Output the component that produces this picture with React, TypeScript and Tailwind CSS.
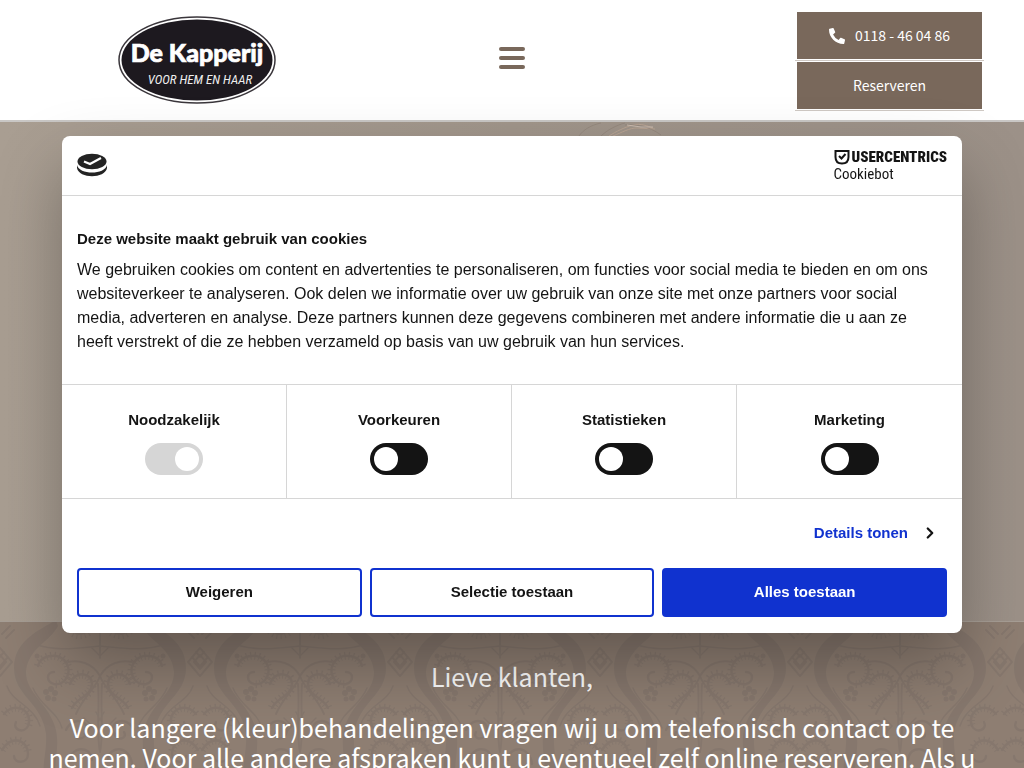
import React from 'react';
import { FaPhoneAlt } from 'react-icons/fa';
import { ChevronRight } from 'lucide-react';

const categories = [
  { id: 'necessary', label: 'Noodzakelijk', locked: true },
  { id: 'preferences', label: 'Voorkeuren', locked: false },
  { id: 'statistics', label: 'Statistieken', locked: false },
  { id: 'marketing', label: 'Marketing', locked: false },
];

function Logo() {
  return (
    <svg viewBox="0 0 158 88" className="w-[158px] h-[88px]" role="img" aria-label="De Kapperij">
      <ellipse cx="79" cy="44" rx="78" ry="43" fill="#fff" stroke="#3a363b" strokeWidth="1.5" />
      <ellipse cx="79" cy="44" rx="75.5" ry="40.5" fill="#1d191f" />
      <text
        x="79"
        y="46"
        textAnchor="middle"
        fill="#fff"
        stroke="#fff"
        strokeWidth="0.7"
        className="font-['Lato'] font-black text-[25px]"
      >
        De Kapperij
      </text>
      <text
        x="82"
        y="68"
        textAnchor="middle"
        fill="#eee"
        className="font-['Roboto_Condensed','Roboto',sans-serif] italic text-[13px]"
      >
        VOOR HEM EN HAAR
      </text>
    </svg>
  );
}

// One half of the wallpaper motif, the other half is its mirror image
function DamaskHalf() {
  return (
    <g fill="none" stroke="#766b65" strokeLinecap="round">
      <path
        d="M56 -2C40 8 14 18 14 46C14 74 42 80 46 112C47 130 42 140 44 156L56 156C53 140 60 128 56 108C50 82 26 72 26 50C28 26 50 20 58 4Z"
        fill="#766b65"
        stroke="none"
      />
      <path d="M7 64C12 80 34 84 40 104M34 22C58 30 78 26 100 24M33 66C40 84 58 90 62 106" strokeWidth="1.5" />
      <path d="M100 54C92 40 78 38 68 40M100 54C96 66 84 74 76 92M98 62C100 84 96 110 100 130" strokeWidth="2" />
      <path d="M38 44C40 34 56 30 64 38C74 48 66 64 54 62C46 60 46 50 54 50" strokeWidth="2.5" />
      <path d="M38 44C40 34 56 30 64 38C74 48 66 64 54 62" strokeWidth="8" strokeDasharray="1.2 3" strokeLinecap="butt" />
      <path d="M70 62C74 48 92 50 92 62C92 74 76 76 72 86" strokeWidth="2.5" />
      <path d="M70 62C74 48 92 50 92 62C92 74 76 76 72 86" strokeWidth="9" strokeDasharray="1.2 3" strokeLinecap="butt" />
      <path d="M70 -2C68 12 84 16 88 6C90 0 82 -2 80 4" strokeWidth="3" />
      <path d="M66 -2C64 18 90 20 94 4" strokeWidth="5" strokeDasharray="1.2 3" strokeLinecap="butt" />
      <path d="M4 92C16 78 34 90 28 104C24 112 12 108 16 100M2 128C12 112 28 118 28 132C28 142 14 142 14 134" strokeWidth="2.5" />
      <path d="M4 92C16 78 34 90 28 104M2 128C12 112 28 118 28 132" strokeWidth="8" strokeDasharray="1.2 3" strokeLinecap="butt" />
      <path d="M66 108C74 92 92 100 86 112C82 120 72 116 76 110M68 142C70 124 90 122 92 138" strokeWidth="2.5" />
      <path d="M100 -2V36M92 26L100 34M84 96L92 104L84 112M96 90L100 98" strokeWidth="1.5" />
      <path d="M0 26L12 40L0 54M0 33L6 40L0 47M4 30L-8 44M8 35L-4 49M10 4L2 12M14 8L6 16" strokeWidth="2" />
      <circle cx="37" cy="34" r="2.5" fill="#766b65" stroke="none" />
      <g fill="#766b65" stroke="none">
        <circle cx="46" cy="70" r="3" />
        <circle cx="51" cy="67" r="3" />
        <circle cx="55" cy="71" r="3" />
        <circle cx="48" cy="76" r="3" />
        <circle cx="54" cy="77" r="2.5" />
      </g>
    </g>
  );
}

function Damask() {
  return (
    <svg className="absolute inset-0 w-full h-full" aria-hidden="true">
      <defs>
        <pattern id="damask" width="200" height="150" patternUnits="userSpaceOnUse">
          <DamaskHalf />
          <g transform="translate(200 0) scale(-1 1)">
            <DamaskHalf />
          </g>
        </pattern>
      </defs>
      <rect width="100%" height="100%" fill="url(#damask)" opacity="0.35" />
    </svg>
  );
}

function Header() {
  return (
    <header className="grid grid-cols-3 items-start h-[122px] bg-white border-b-2 border-[#c9c7c5]">
      <a href="#home" className="justify-self-start mt-4 ml-[118px]">
        <Logo />
      </a>
      <button type="button" aria-label="Menu" className="justify-self-center mt-[47px] flex flex-col gap-[5px]">
        <span className="block w-[26px] h-1 rounded-full bg-[#79685b]" />
        <span className="block w-[26px] h-1 rounded-full bg-[#79685b]" />
        <span className="block w-[26px] h-1 rounded-full bg-[#79685b]" />
      </button>
      <div className="justify-self-end mt-3 mr-10 flex flex-col gap-px font-['Noto_Sans_CJK_SC',sans-serif] text-[14px] text-white">
        <div className="w-[189px] px-[2px] pb-px border-b border-[#cfc9c4]">
          <a href="tel:0118460486" className="flex items-center justify-center gap-[10px] h-[47px] bg-[#79685b]">
            <FaPhoneAlt className="w-4 h-4" />
            0118 - 46 04 86
          </a>
        </div>
        <div className="w-[189px] px-[2px] pb-px border-b border-[#cfc9c4]">
          <a href="#reserveren" className="flex items-center justify-center h-[47px] bg-[#79685b]">
            Reserveren
          </a>
        </div>
      </div>
    </header>
  );
}

function Hero() {
  return (
    <section className="relative h-[500px] bg-linear-to-r from-[#a99e92] via-[#a1968b] to-[#9c9188] border-b border-[#a79e95]">
      <svg
        viewBox="0 0 90 14"
        className="absolute top-0 left-[575px] w-[90px] h-[14px]"
        fill="none"
        stroke="#b9a493"
        aria-hidden="true"
      >
        <path d="M34 14C42 9 48 6 58 3C66 1 72 4 78 6M38 14C48 10 54 6 62 6L80 7" strokeWidth="1" />
        <path d="M4 14C8 8 16 3 26 1M26 14C32 8 42 3 50 1M50 3C60 2 74 4 86 13" strokeWidth="0.5" stroke="#8b7d72" />
        <path d="M52 3L66 5L78 5" stroke="#d3c4b7" strokeWidth="0.8" />
      </svg>
    </section>
  );
}

function Notice() {
  return (
    <section className="relative bg-[#8e7e72] px-10 pt-[34px] pb-12 text-center font-['Noto_Sans_CJK_SC',sans-serif] text-white">
      <Damask />
      <div className="relative">
        <h2 className="text-[25px] leading-10">Lieve klanten,</h2>
        <p className="mt-4 text-[25px] leading-[30px]">
          Voor langere (kleur)behandelingen vragen wij u om telefonisch contact op te nemen. Voor alle andere
          afspraken kunt u eventueel zelf online reserveren. Als u
        </p>
      </div>
    </section>
  );
}

function CookieIcon() {
  return (
    <svg viewBox="0 0 30 24" className="w-[30px] h-6" aria-hidden="true">
      <path d="M0 12C2 22 28 22 30 12V15C28 26 2 26 0 15Z" fill="#232323" />
      <ellipse cx="15" cy="8.5" rx="14.5" ry="7.8" fill="#232323" />
      <path d="M7 8.5L13 11L24 5" fill="none" stroke="#fff" strokeWidth="2.2" />
    </svg>
  );
}

function CookiebotLogo() {
  return (
    <a
      href="#cookiebot"
      className="flex flex-col pt-[2px] text-[15px] leading-[17px] text-[#141414] font-['Roboto_Condensed','Roboto',sans-serif]"
    >
      <span className="flex items-center gap-[2px]">
        <svg viewBox="0 0 16 15" className="w-4 h-[15px]" fill="none" stroke="#141414" strokeWidth="2" aria-hidden="true">
          <path d="M1.5 1H14.5V7C14.5 11 12 13.5 8 13.5C4 13.5 1.5 11 1.5 7Z" />
          <path d="M5 6L7.5 8.5L11.5 4" />
        </svg>
        <span className="font-black">USERCENTRICS</span>
      </span>
      <span>Cookiebot</span>
    </a>
  );
}

function CookieDialog() {
  return (
    <div className="fixed inset-0 flex items-center justify-center px-[62px]">
      <div
        role="dialog"
        aria-labelledby="cookie-title"
        className="w-full max-w-[900px] rounded-lg bg-white text-[#141414] font-['Liberation_Sans',sans-serif] shadow-[0_32px_68px_rgba(0,0,0,0.3)]"
      >
        <div className="flex items-center justify-between h-[60px] px-[15px] border-b border-[#d6d6d6]">
          <CookieIcon />
          <CookiebotLogo />
        </div>

        <div className="pl-[15px] pr-6 pt-[31px] pb-[30px]">
          <h2 id="cookie-title" className="text-[15px] leading-6 font-bold">
            Deze website maakt gebruik van cookies
          </h2>
          <p className="mt-[7px] text-[16px] leading-6">
            We gebruiken cookies om content en advertenties te personaliseren, om functies voor social media te
            bieden en om ons websiteverkeer te analyseren. Ook delen we informatie over uw gebruik van onze site met
            onze partners voor social media, adverteren en analyse. Deze partners kunnen deze gegevens combineren met
            andere informatie die u aan ze heeft verstrekt of die ze hebben verzameld op basis van uw gebruik van hun
            services.
          </p>
        </div>

        <div className="grid grid-cols-4 border-y border-[#d6d6d6] divide-x divide-[#d6d6d6]">
          {categories.map((category) => (
            <label
              key={category.id}
              htmlFor={category.id}
              className="flex flex-col items-center gap-[11px] py-[23px] text-[15px] leading-6 font-bold"
            >
              {category.label}
              <input
                id={category.id}
                type="checkbox"
                defaultChecked={category.locked}
                disabled={category.locked}
                className="appearance-none relative w-[58px] h-8 rounded-full bg-[#141414] disabled:bg-[#d6d6d6] before:absolute before:top-1 before:left-1 before:w-6 before:h-6 before:rounded-full before:bg-white checked:before:left-[30px]"
              />
            </label>
          ))}
        </div>

        <div className="flex justify-end px-[23px] pt-[22px] pb-[23px]">
          <a href="#details" className="flex items-center gap-[13px] text-[15px] leading-6 font-bold text-[#1032cf]">
            Details tonen
            <ChevronRight className="w-[18px] h-[18px] text-[#141414]" strokeWidth={3} />
          </a>
        </div>

        <div className="grid grid-cols-3 gap-2 px-[15px] pb-4 text-[15px] font-bold">
          <button type="button" className="h-[49px] rounded border-2 border-[#1032cf]">
            Weigeren
          </button>
          <button type="button" className="h-[49px] rounded border-2 border-[#1032cf]">
            Selectie toestaan
          </button>
          <button type="button" className="h-[49px] rounded border-2 border-[#1032cf] bg-[#1032cf] text-white">
            Alles toestaan
          </button>
        </div>
      </div>
    </div>
  );
}

export default function App() {
  return (
    <div className="h-screen overflow-hidden bg-white">
      <Header />
      <Hero />
      <Notice />
      <CookieDialog />
    </div>
  );
}
